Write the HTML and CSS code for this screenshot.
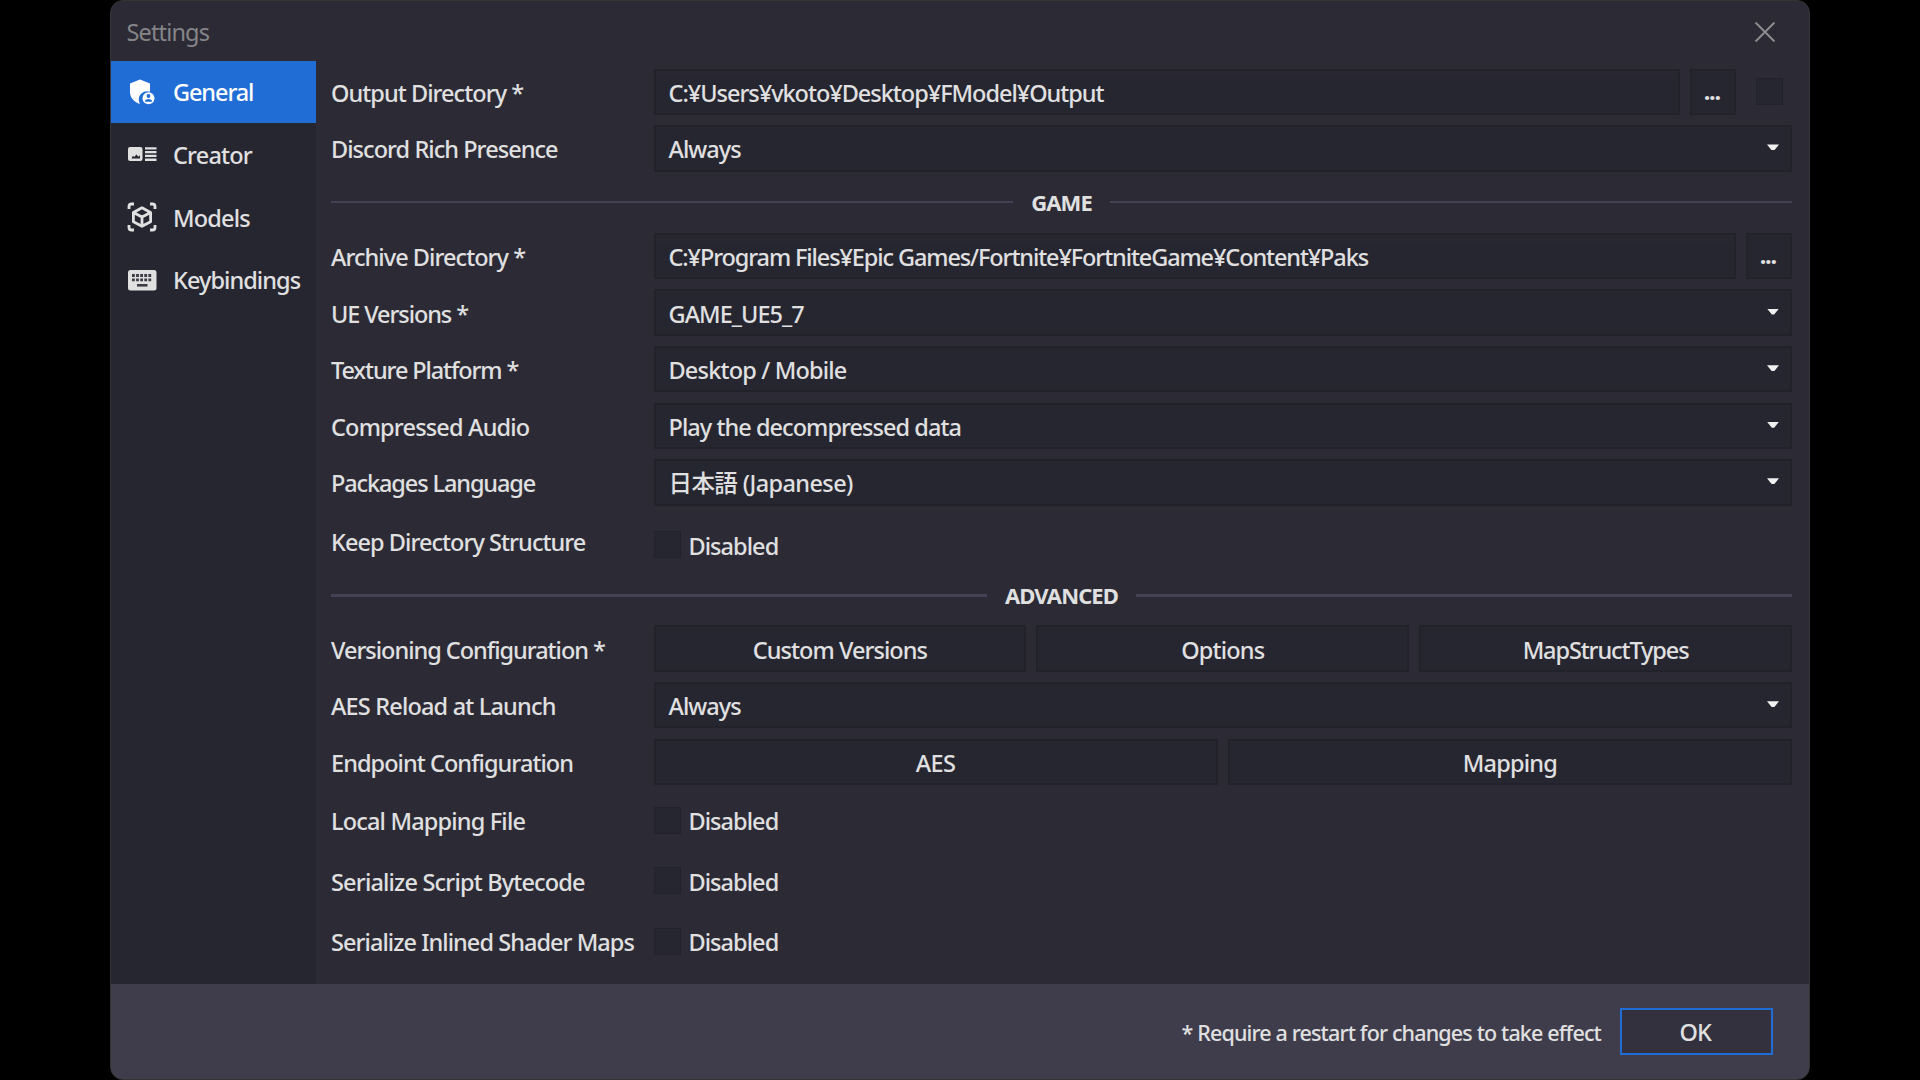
FILE: index.html
```html
<!DOCTYPE html>
<html lang="en">
<head>
<meta charset="utf-8">
<title>Settings</title>
<link rel="stylesheet" href="styles.css">
</head>
<body>
<main class="window">
  <header class="titlebar">
    <h1 class="title">Settings</h1>
    <svg class="close" viewBox="0 0 22 22"><path d="M1.5 1.5l19 19M20.5 1.5l-19 19"/></svg>
  </header>
  <div class="body">
    <nav class="sidebar">
      <a class="tab active">
        <svg class="icon" viewBox="0 0 30 30"><path fill="currentColor" d="M13 2.500L3 6.500v9C3 20.500 7.500 25.500 13 27c-.800-1.500-1.200-3-1.200-4.500 0-4.500 3.600-8.200 8.200-8.200 1.300 0 2.200.200 3 .500V6.500z"/><circle cx="21.500" cy="21.300" r="6" fill="currentColor"/><circle cx="21.500" cy="19" r="1.900" fill="#216dd6"/><path fill="#216dd6" d="M17.800 24.800c0-3.800 7.400-3.800 7.400 0z"/></svg>
        <span class="near">General</span>
      </a>
      <a class="tab">
        <svg class="icon" viewBox="0 0 30 30"><path fill="currentColor" fill-rule="evenodd" d="M3 7h10.500a2 2 0 0 1 2 2v10a2 2 0 0 1-2 2H3a2 2 0 0 1-2-2V9a2 2 0 0 1 2-2zm1.500 11.500h8.500v-3.200l-1.600 1.400-2-2.200-2.100 2.500-1.400-1.200z"/><path fill="currentColor" d="M18 7.300h11.500v2.300H18zM18 11h11.500v2.300H18zM18 14.700h11.500V17H18zM18 18.600h11.500v2.300H18z"/></svg>
        <span class="loose">Creator</span>
      </a>
      <a class="tab">
        <svg class="icon" viewBox="0 0 30 30" fill="none" stroke="currentColor" stroke-width="2.800"><path d="M2 7V4.500A2.500 2.500 0 0 1 4.500 2H7M23 2h2.500A2.500 2.500 0 0 1 28 4.500V7M28 23v2.500a2.500 2.500 0 0 1-2.500 2.500H23M7 28H4.500A2.500 2.500 0 0 1 2 25.500V23"/><path stroke-linejoin="round" d="M15 5.800l8.600 4.600v9.300L15 24.300l-8.600-4.600v-9.300zM6.400 10.400L15 15l8.600-4.600M15 15v9.300"/></svg>
        <span class="loose">Models</span>
      </a>
      <a class="tab">
        <svg class="icon" viewBox="0 0 30 30"><rect x="1" y="5" width="28.500" height="20.500" rx="2.500" fill="currentColor"/><path stroke="#3c3c45" stroke-width="2.800" stroke-dasharray="2.800 1.300" d="M5 10.500h20.500M5 14.800h20.500"/><path stroke="#3c3c45" stroke-width="2.600" d="M10 20.300h10.500"/></svg>
        <span>Keybindings</span>
      </a>
    </nav>
    <section class="form">
      <div class="row">
        <label>Output Directory *</label>
        <div class="controls"><div class="field text snug">C:¥Users¥vkoto¥Desktop¥FModel¥Output</div><button class="field more">...</button><i class="check lone"></i></div>
      </div>
      <div class="row">
        <label>Discord Rich Presence</label>
        <div class="controls"><div class="field select">Always</div></div>
      </div>
      <div class="divider"><span>GAME</span></div>
      <div class="row">
        <label>Archive Directory *</label>
        <div class="controls"><div class="field text tight">C:¥Program Files¥Epic Games/Fortnite¥FortniteGame¥Content¥Paks</div><button class="field more">...</button></div>
      </div>
      <div class="row">
        <label class="near">UE Versions *</label>
        <div class="controls"><div class="field select">GAME_UE5_7</div></div>
      </div>
      <div class="row">
        <label class="tight">Texture Platform *</label>
        <div class="controls"><div class="field select loose">Desktop / Mobile</div></div>
      </div>
      <div class="row">
        <label class="loose">Compressed Audio</label>
        <div class="controls"><div class="field select">Play the decompressed data</div></div>
      </div>
      <div class="row">
        <label class="tight">Packages Language</label>
        <div class="controls"><div class="field select looser">日本語 (Japanese)</div></div>
      </div>
      <div class="row tall offset">
        <label>Keep Directory Structure</label>
        <div class="controls"><i class="check"></i><span class="state">Disabled</span></div>
      </div>
      <div class="divider second"><span>ADVANCED</span></div>
      <div class="row">
        <label class="snug">Versioning Configuration *</label>
        <div class="controls"><button class="field">Custom Versions</button><button class="field loose">Options</button><button class="field tight">MapStructTypes</button></div>
      </div>
      <div class="row">
        <label class="loose">AES Reload at Launch</label>
        <div class="controls"><div class="field select">Always</div></div>
      </div>
      <div class="row">
        <label>Endpoint Configuration</label>
        <div class="controls"><button class="field looser">AES</button><button class="field loose">Mapping</button></div>
      </div>
      <div class="row tall">
        <label class="loose">Local Mapping File</label>
        <div class="controls"><i class="check"></i><span class="state">Disabled</span></div>
      </div>
      <div class="row tall">
        <label class="loose">Serialize Script Bytecode</label>
        <div class="controls"><i class="check"></i><span class="state">Disabled</span></div>
      </div>
      <div class="row tall">
        <label>Serialize Inlined Shader Maps</label>
        <div class="controls"><i class="check"></i><span class="state">Disabled</span></div>
      </div>
    </section>
  </div>
  <footer class="footer">
    <span class="note">* Require a restart for changes to take effect</span>
    <button class="ok">OK</button>
  </footer>
</main>
</body>
</html>
```
FILE: styles.css
```css
* { box-sizing: border-box; }

body {
  margin: 0;
  height: 1080px;
  overflow: hidden;
  background: #000;
  color: #e0e0e1;
  font: 500 23.5px/32px "Noto Sans", "Noto Sans CJK JP", sans-serif;
  letter-spacing: -0.95px;
}

button {
  font: inherit;
  color: inherit;
  letter-spacing: inherit;
}

/* Per-label tracking */
.looser { letter-spacing: -0.6px; }
.loose { letter-spacing: -0.82px; }
.snug { letter-spacing: -1.02px; }
.near { letter-spacing: -1.1px; }
.tight { letter-spacing: -1.11px; }

.window {
  width: 1700px;
  height: 1079.500px;
  margin-left: 109.500px;
  display: flex;
  flex-direction: column;
  overflow: hidden;
  background: #2c2b35;
  border: 1px solid #353535;
  border-radius: 13px;
}

.titlebar {
  height: 59.500px;
  flex: none;
  display: flex;
  align-items: center;
  justify-content: space-between;
  padding: 2px 33px 0 16px;
}

.title {
  margin: 0;
  font-size: inherit;
  font-weight: 400;
  letter-spacing: -0.85px;
  color: #858588;
}

.close {
  width: 22px;
  height: 22px;
  stroke: #8c8c8e;
  stroke-width: 1.900;
}

.body {
  flex: 1;
  display: flex;
  min-height: 0;
}

.sidebar {
  width: 205.500px;
  flex: none;
  background: #262630;
}

.tab {
  height: 62.700px;
  display: flex;
  align-items: center;
  gap: 16px;
  padding: 1px 0 0 16.500px;
}

.tab.active {
  background: #216dd6;
  color: #fff;
}

.icon {
  width: 30px;
  height: 30px;
  margin-top: -1px;
  flex: none;
}

.form {
  flex: 1;
  padding: 3px 16.500px 0 15px;
}

.row {
  height: 56.600px;
  display: grid;
  grid-template-columns: 322.500px 1fr;
  align-items: center;
}

.row.tall { height: 60.500px; }

.row label {
  padding-top: 2px;
  white-space: nowrap;
}

.controls {
  display: flex;
  align-items: center;
  gap: 10px;
}

.field {
  flex: 1 1 0;
  height: 46.500px;
  padding: 2px 13px 0 13px;
  display: flex;
  align-items: center;
  justify-content: center;
  background: #262630;
  border: 2px solid #22222b;
  white-space: nowrap;
}

.field.text,
.field.select { justify-content: flex-start; }

.field.text { background: linear-gradient(#292832, #262630 12px); }

.field.more {
  flex: 0 0 46.500px;
  padding: 0 2px 2px 0;
  font-weight: 700;
  letter-spacing: -1.200px;
}

.field.select::after {
  content: "";
  width: 12px;
  height: 6px;
  margin: -4px -2px 0 auto;
  background: #f0f0f0;
  clip-path: polygon(0 0, 100% 0, 60% 100%, 40% 100%);
}

.check {
  width: 27px;
  height: 27px;
  flex: none;
  background: #262630;
  border: 1.500px solid #22222b;
}

.check.lone { margin: 0 9px 0 10px; }

.state {
  padding-top: 2px;
  margin-left: -2px;
}

.offset .controls { padding-top: 8px; }

.divider {
  height: 51px;
  display: flex;
  align-items: center;
  gap: 18px;
  font-size: 22px;
  font-weight: 700;
  letter-spacing: -0.9px;
}

.divider::before,
.divider::after {
  content: "";
  flex: 1;
  height: 2.500px;
  background: #434155;
}

.divider span { margin-bottom: 1px; }

.divider.second {
  height: 49.200px;
  padding-bottom: 1px;
}

.footer {
  height: 94.500px;
  flex: none;
  display: flex;
  align-items: center;
  justify-content: flex-end;
  gap: 19px;
  padding-right: 36px;
  background: #3f3d4b;
}

.note {
  padding-top: 3px;
  font-size: 21.500px;
  font-weight: 500;
  letter-spacing: -0.85px;
}

.ok {
  width: 152.500px;
  height: 47px;
  background: #32313d;
  border: 2px solid #216dd6;
  padding: 2px 2px 0 0;
}
```
